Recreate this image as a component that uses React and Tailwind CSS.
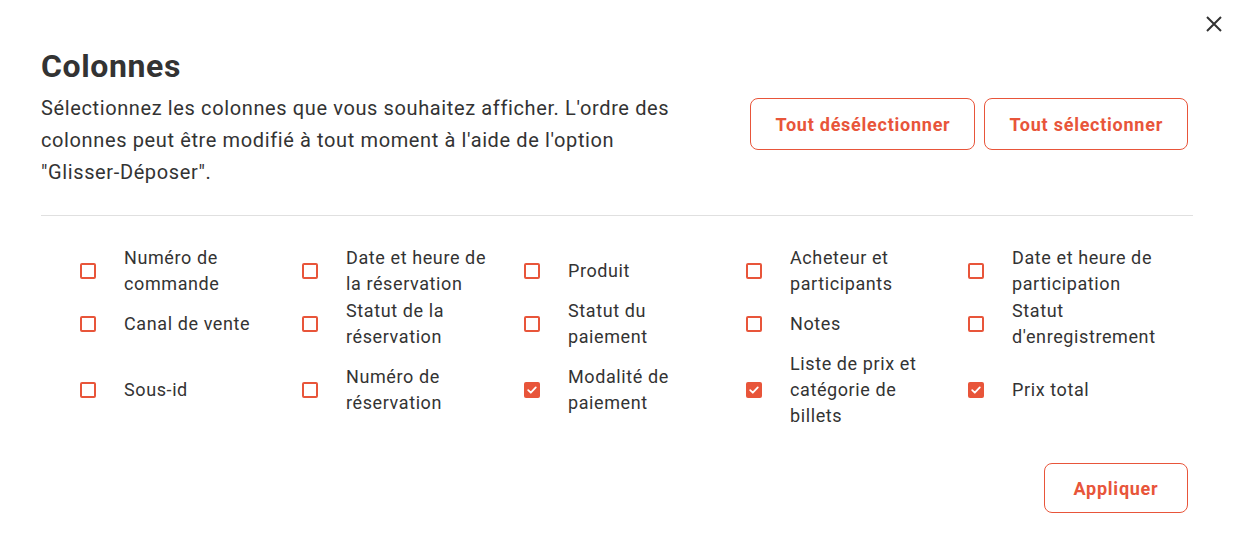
import React from "react";

const items = [
  ["Numéro de commande", false],
  ["Date et heure de la réservation", false],
  ["Produit", false],
  ["Acheteur et participants", false],
  ["Date et heure de participation", false],
  ["Canal de vente", false],
  ["Statut de la réservation", false],
  ["Statut du paiement", false],
  ["Notes", false],
  ["Statut d'enregistrement", false],
  ["Sous-id", false],
  ["Numéro de réservation", false],
  ["Modalité de paiement", true],
  ["Liste de prix et catégorie de billets", true],
  ["Prix total", true],
];

function Box({ checked }) {
  if (checked) {
    return (
      <span className="flex h-4 w-4 shrink-0 items-center justify-center rounded-[2px] bg-[#e8553a]">
        <svg width="12" height="12" viewBox="0 0 12 12" fill="none">
          <path d="M2.2 6.2 L4.8 8.7 L9.8 3.4" stroke="white" strokeWidth="1.8" strokeLinecap="round" strokeLinejoin="round" />
        </svg>
      </span>
    );
  }
  return <span className="h-4 w-4 shrink-0 rounded-[2px] border-2 border-[#e8553a] bg-white" />;
}

export default function App() {
  return (
    <div
      className="relative min-h-[534px] w-[1243px] bg-white pl-[41px] pr-[50px] pt-[46px] text-[#333333]"
      style={{ fontFamily: "Roboto, 'Liberation Sans', sans-serif" }}
    >
      <button className="absolute right-[20px] top-[15px] flex h-[18px] w-[18px] items-center justify-center">
        <svg width="18" height="18" viewBox="0 0 18 18" fill="none">
          <path d="M2 2 L16 16 M16 2 L2 16" stroke="#333333" strokeWidth="2" />
        </svg>
      </button>

      <div className="flex items-start justify-between">
        <div className="w-[636px]">
          <h1 className="text-[32px] font-bold leading-[40px] tracking-[0.6px] text-[#333333]">Colonnes</h1>
          <p className="mt-[6px] text-[20px] leading-[32px] tracking-[0.62px] text-[#333333]">
            Sélectionnez les colonnes que vous souhaitez afficher. L'ordre des colonnes peut être modifié à tout moment à l'aide de l'option "Glisser-Déposer".
          </p>
        </div>
        <div className="mr-[5px] mt-[52px] flex gap-[9px]">
          <button className="h-[52px] rounded-[8px] border border-[#e8553a] pl-[25px] pr-[24px] text-[18px] font-bold tracking-[0.75px] text-[#e8553a]">
            Tout désélectionner
          </button>
          <button className="h-[52px] rounded-[8px] border border-[#e8553a] px-[24px] text-[18px] font-bold tracking-[0.75px] text-[#e8553a]">
            Tout sélectionner
          </button>
        </div>
      </div>

      <div className="mt-[27px] h-px bg-[#e0e0e0]" />

      <div className="mt-[29px] grid grid-cols-[repeat(5,222px)] gap-y-[1px] pl-[39px]">
        {items.map(([label, checked]) => (
          <div key={label} className="flex items-center gap-[28px]">
            <Box checked={checked} />
            <span className="w-[152px] text-[18px] leading-[26px] tracking-[0.6px] text-[#333333]">{label}</span>
          </div>
        ))}
      </div>

      <div className="mr-[5px] mt-[34px] flex justify-end">
        <button className="h-[50px] w-[144px] rounded-[8px] border border-[#e8553a] text-[18px] font-bold tracking-[0.75px] text-[#e8553a]">
          Appliquer
        </button>
      </div>
    </div>
  );
}
